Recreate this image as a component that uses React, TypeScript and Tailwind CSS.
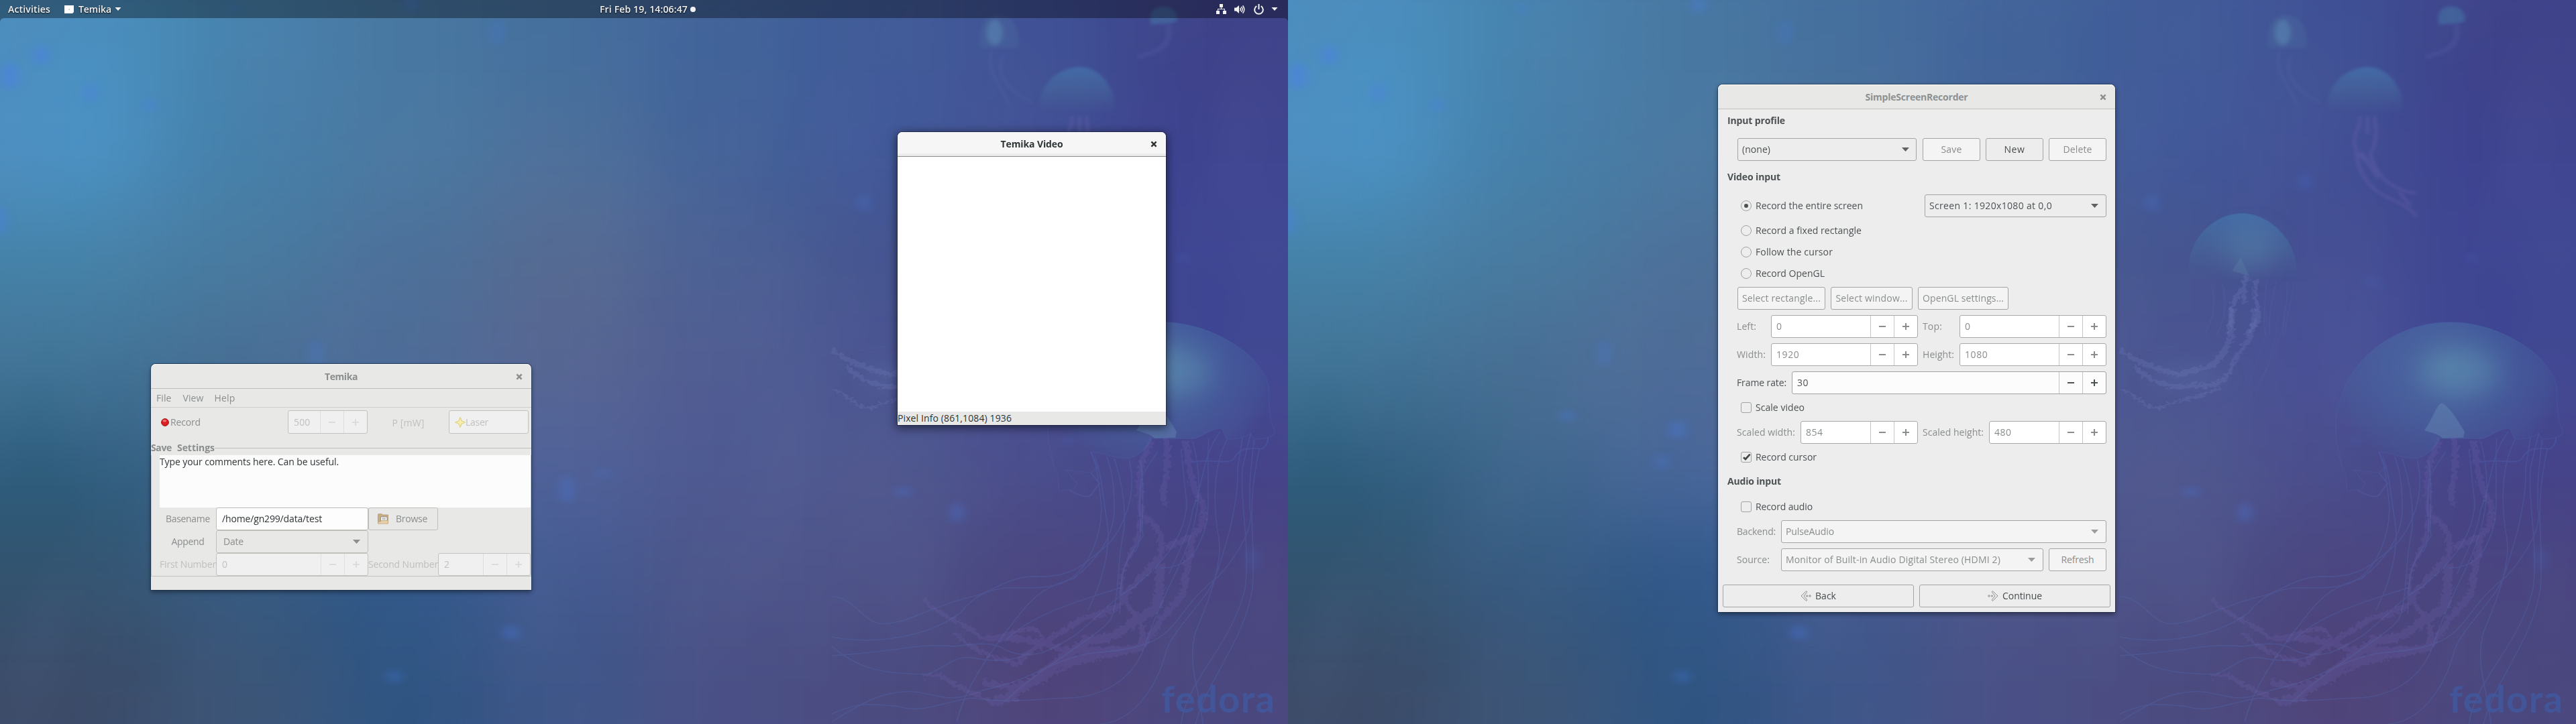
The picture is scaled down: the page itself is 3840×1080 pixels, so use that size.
import React, { useLayoutEffect, useRef, useState } from "react";
import clsx from "clsx";

/* Text whose tracking is adjusted so that it occupies a given width. */
function Txt({ w, className, children }: { w?: number; className?: string; children: string }) {
  const ref = useRef<HTMLSpanElement>(null);
  const [spacing, setSpacing] = useState(0);
  useLayoutEffect(() => {
    if (!ref.current || !w) return;
    setSpacing((w - ref.current.getBoundingClientRect().width) / children.length);
  }, []);
  return (
    <span ref={ref} className={clsx("inline-block whitespace-pre", className)} style={{ letterSpacing: `${spacing}px` }}>
      {children}
    </span>
  );
}

const SKY = [
  ["#4a90c0", "#4784ae", "#4878a2", "#456f9d", "#41639a", "#3f5a98", "#3e4f94", "#3e4289"],
  ["#4c93c6", "#4580aa", "#4a7aa2", "#4d719b", "#436298", "#41589a", "#414e94", "#3e4290"],
  ["#4483a8", "#4a7ba0", "#4a7098", "#566a90", "#4b6093", "#46558f", "#444e92", "#3e4592"],
  ["#3f7596", "#486e94", "#4f6c97", "#586692", "#505c92", "#4a5492", "#4a5198", "#3e4592"],
  ["#2c5c7c", "#40688e", "#48669a", "#51629a", "#4e5992", "#50598f", "#4a4d8c", "#444088"],
  ["#32546f", "#365b82", "#2f588a", "#445b92", "#4d5589", "#4c5086", "#4b4681", "#4a4580"],
  ["#3a4a66", "#3c5577", "#2c5380", "#3e5588", "#4a5085", "#4b4b80", "#4e4278", "#4a477e"],
];

const SPARKS: [number, number, number, number][] = [
  [12, 165, 10, 30], [50, 120, 8, 22], [182, 228, 5, 16], [110, 200, 6, 20], [1052, 440, 5, 20],
  [605, 70, 5, 30], [500, 10, 9, 18], [474, 930, 10, 20], [385, 765, 6, 30], [735, 1025, 5, 10],
  [622, 1370, 9, 16], [480, 1465, 8, 14], [1100, 1065, 8, 10], [1165, 1110, 7, 22], [690, 1060, 7, 30],
  [1238, 392, 6, 20], [1290, 410, 3, 6], [1320, 610, 5, 14], [1300, 955, 5, 8], [1440, 560, 4, 12],
  [1525, 1210, 5, 26], [455, 1000, 6, 16], [340, 900, 8, 12], [0, 480, 6, 34], [285, 18, 4, 16],
];

const THREADS = [
  "M0 1087C80 1090 110 1190 175 1190C260 1190 350 1120 480 1088C560 1070 600 1010 700 1012C830 1015 860 970 950 890C1000 830 1040 720 1030 620L1022 570",
  "M0 1240C150 1270 330 1240 440 1150C500 1070 560 1050 640 1055C800 1060 830 1020 870 965C920 880 935 780 922 700C915 640 912 590 892 545",
  "M0 1310C200 1300 300 1260 420 1275C520 1260 560 1260 600 1290C700 1340 780 1270 840 1230C930 1150 960 1100 1040 1050C1150 950 1210 860 1220 740L1200 530",
  "M0 1275C100 1370 200 1380 330 1380C400 1350 420 1310 480 1318C560 1330 600 1340 680 1300",
  "M0 1560C100 1490 180 1440 280 1446C350 1450 400 1500 520 1440C700 1400 760 1320 900 1300C1000 1290 1080 1280 1140 1230C1200 1180 1220 1100 1330 1010C1380 950 1440 850 1440 780C1430 700 1440 600 1452 495",
  "M0 1530C100 1480 140 1495 220 1500C320 1530 360 1490 480 1470C600 1490 700 1475 800 1470C960 1470 1050 1370 1080 1260C1130 1100 1180 1010 1210 930C1240 850 1290 700 1240 500",
  "M430 1560C450 1450 540 1300 620 1190C700 1070 740 1050 830 1020C900 960 960 880 970 780C975 680 960 600 945 560",
  "M600 1250C700 1140 900 1090 1000 1050",
  "M970 565C1000 660 1015 780 1000 860C980 960 990 1080 960 1170C920 1240 700 1360 580 1500",
  "M880 1140C940 1010 960 880 945 800C930 700 930 640 905 560",
  "M920 1568C1060 1560 1130 1380 1150 1290C1180 1200 1290 1100 1320 1010C1340 940 1400 760 1395 600L1412 488",
  "M1200 1568C1220 1400 1370 1280 1420 1060C1440 900 1400 720 1412 600L1440 470",
  "M1250 1568C1290 1400 1420 1250 1445 1060C1460 880 1420 760 1470 530",
  "M1275 1568C1265 1440 1220 1350 1250 1220C1290 1120 1345 960 1330 870C1310 740 1310 600 1358 495",
  "M1295 490C1290 640 1300 760 1285 820C1260 920 1220 980 1130 980",
  "M1335 465C1270 560 1280 660 1240 760C1230 840 1200 900 1160 1000",
  "M1060 570C1080 700 1060 800 1070 860C1000 960 990 1000 990 1150",
  "M1120 540C1080 610 1060 620 1060 700C1050 780 1080 860 1040 920",
];

const ARMS = [
  ["M1150 480C1155 540 1150 600 1150 640C1140 670 1130 690 1150 740", 20],
  ["M1215 500C1225 600 1240 690 1275 740C1290 860 1230 860 1150 900", 22],
  ["M1100 500C1050 590 1050 640 1062 780C1130 820 1140 870 1130 930C1090 1000 1010 1050 1000 1110C930 1170 870 1150 820 1200C720 1270 670 1290 630 1350", 22],
  ["M1240 850C1240 930 1210 980 1210 1080C1140 1150 1120 1200 1060 1280C960 1290 900 1290 800 1290C700 1250 640 1240 520 1245", 24],
  ["M1130 960C1120 1050 1140 1140 1080 1150C1000 1210 960 1260 880 1250C780 1330 700 1410 560 1490", 34],
  ["M1060 800C1060 900 990 960 995 1060C1010 1160 1120 1180 1040 1290C900 1320 800 1340 700 1420", 16],
  ["M315 1095C360 1160 440 1170 510 1240C600 1250 640 1200 700 1210L740 1260", 14],
  ["M420 1215C450 1270 530 1310 630 1340", 16],
  ["M310 1388L370 1384C430 1430 490 1450 560 1490L640 1470", 16],
  ["M520 1410C590 1430 640 1440 700 1390C790 1330 860 1320 940 1290", 22],
] as [string, number][];

function Wallpaper() {
  return (
    <svg className="h-[1080px] w-[1920px] shrink-0 overflow-hidden" viewBox="0 0 1920 1080" aria-hidden="true">
      <defs>
        <filter id="sky" x="-20%" y="-20%" width="140%" height="140%" colorInterpolationFilters="sRGB"><feGaussianBlur stdDeviation="70" /></filter>
        <filter id="soft" x="-100%" y="-100%" width="300%" height="300%" colorInterpolationFilters="sRGB"><feGaussianBlur stdDeviation="7" /></filter>
        <filter id="edge" x="-20%" y="-20%" width="140%" height="140%" colorInterpolationFilters="sRGB"><feGaussianBlur stdDeviation="6" /></filter>
        <filter id="glow" x="-100%" y="-100%" width="300%" height="300%" colorInterpolationFilters="sRGB"><feGaussianBlur stdDeviation="45" /></filter>
        <filter id="rag" x="-10%" y="-10%" width="120%" height="120%" colorInterpolationFilters="sRGB">
          <feTurbulence type="fractalNoise" baseFrequency="0.07" numOctaves="3" seed="4" result="n" />
          <feDisplacementMap in="SourceGraphic" in2="n" scale="30" xChannelSelector="R" yChannelSelector="G" />
        </filter>
        <filter id="mist" filterUnits="userSpaceOnUse" x="-800" y="-800" width="3600" height="2800" colorInterpolationFilters="sRGB">
          <feTurbulence type="fractalNoise" baseFrequency="0.006 0.003" numOctaves="2" seed="11" />
          <feColorMatrix values="0 0 0 0 0.4  0 0 0 0 0.47  0 0 0 0 0.66  2 0 0 0 -0.75" />
        </filter>
        <radialGradient id="bell" gradientUnits="userSpaceOnUse" cx="1120" cy="220" r="420">
          <stop offset="0" stopColor="#5685ad" stopOpacity="0.62" />
          <stop offset="0.5" stopColor="#4a70a6" stopOpacity="0.5" />
          <stop offset="0.85" stopColor="#46609b" stopOpacity="0.32" />
          <stop offset="1" stopColor="#4a5590" stopOpacity="0.05" />
        </radialGradient>
        <linearGradient id="dome" x1="0" y1="0" x2="0" y2="1">
          <stop offset="0" stopColor="#4478b0" stopOpacity="0.7" />
          <stop offset="0.5" stopColor="#486fa0" stopOpacity="0.45" />
          <stop offset="1" stopColor="#4a6595" stopOpacity="0" />
        </linearGradient>
      </defs>
      <g filter="url(#sky)">
        {[-1, 0, 1, 2, 3, 4, 5, 6, 7].map((r) =>
          [-1, 0, 1, 2, 3, 4, 5, 6, 7, 8].map((c) => (
            <rect key={`${r}.${c}`} x={c * 240 - 1} y={r * 155 - 2} width="242" height="157"
              fill={SKY[Math.min(6, Math.max(0, r))][Math.min(7, Math.max(0, c))]} />
          ))
        )}
      </g>
      <rect x="-800" y="-800" width="3600" height="2800" filter="url(#mist)" opacity="0.13" transform="rotate(12)" />
      <g transform="scale(1.2245 .6888)" filter="url(#soft)" fill="#4a7ee8">
        {SPARKS.map(([x, y, rx, ry], i) => (
          <ellipse key={i} cx={x} cy={y} rx={rx} ry={ry} opacity={x < 200 ? 0.55 : x > 1200 ? 0.22 : 0.34} />
        ))}
      </g>
      {/* distant jellyfish */}
      <g transform="translate(1240 0) scale(.4337 .3333)">
        <g filter="url(#edge)">
          <path d="M510 215C500 90 540 66 575 66C620 70 650 130 640 215Z" fill="#4f74a6" opacity="0.28" />
          <ellipse cx="560" cy="145" rx="28" ry="58" fill="#5f8fb5" opacity="0.5" filter="url(#edge)" />
          <path d="M1095 105C1090 50 1110 28 1140 28C1172 28 1190 60 1186 95C1160 112 1120 105 1095 112Z" fill="#4677a8" opacity="0.55" />
          <path d="M716 500C700 400 770 300 850 300C930 300 980 400 974 520C930 480 800 500 716 500Z" fill="url(#dome)" />
          <path d="M1155 110C1170 200 1130 230 1050 255" fill="none" stroke="#5562a8" strokeWidth="22" opacity="0.28" />
          <path d="M548 230C530 330 580 380 610 470M590 250C560 330 600 400 690 460" fill="none" stroke="#5f6cab" strokeWidth="9" opacity="0.28" />
          <path d="M825 520C830 580 790 610 812 670C815 760 850 830 900 870C950 900 1000 930 1020 970M875 520C885 600 880 650 860 690C880 770 920 850 1020 865M850 520L852 600M830 680L890 800C860 740 850 720 812 680M960 860L1000 920" fill="none" stroke="#6460a8" strokeWidth="11" opacity="0.5" />
        </g>
        <path d="M240 1240C220 1080 320 955 420 955C520 955 620 1090 608 1240C590 1250 540 1225 520 1232C490 1260 440 1240 410 1238C380 1280 300 1275 240 1240Z" fill="url(#dome)" />
        <ellipse cx="450" cy="1110" rx="90" ry="110" fill="#5f93b0" opacity="0.3" filter="url(#glow)" />
        <path d="M415 1150L386 1212L445 1236Z" fill="#6088ad" opacity="0.3" />
        <g fill="none" stroke="#6472b5" opacity="0.28" strokeWidth="2.5">
          <path d="M315 1265C330 1360 320 1440 290 1500M352 1270C370 1360 360 1440 330 1500M540 1255C520 1340 510 1420 515 1500M575 1260C580 1360 560 1420 560 1500M598 1260C590 1360 575 1400 566 1500M505 1260C500 1330 490 1420 500 1500" />
        </g>
        <g fill="none" stroke="#6f7ab8" opacity="0.32" filter="url(#rag)" strokeWidth="16">
          <path d="M440 1240C410 1330 370 1370 385 1430L370 1500M430 1240L425 1360M470 1250C450 1330 490 1400 470 1440L435 1500" />
        </g>
      </g>
      <g transform="translate(1240 460) scale(.4337 .3954)">
        <g fill="none" stroke="#6f7ab8" filter="url(#rag)" opacity="0.28">
          <path d="M390 0C370 80 410 90 350 170C330 230 260 230 200 250C120 230 60 200 0 160" strokeWidth="20" />
          <path d="M460 0C470 110 430 130 390 200C380 280 320 300 250 290C180 310 110 280 50 220" strokeWidth="18" />
          <path d="M0 305C60 320 80 380 130 375C220 340 260 340 350 300" strokeWidth="9" />
        </g>
        <ellipse cx="230" cy="260" rx="130" ry="35" fill="#6a7fb5" opacity="0.3" filter="url(#glow)" />
        <g fill="none" stroke="#5a6cae" strokeWidth="2" opacity="0.3">
          <path d="M500 0C520 120 470 180 440 300M540 0C550 130 500 220 450 400M565 0C560 150 480 280 440 340M330 0C300 110 200 150 90 160" />
        </g>
        <path d="M780 690L778 640C760 590 740 520 742 440C745 250 900 52 1140 52C1330 55 1500 200 1503 310C1500 380 1510 440 1526 470C1500 490 1470 495 1450 492L1440 475L1400 490L1358 495L1340 452C1290 455 1270 492 1240 492L1100 490C1080 540 1040 570 1000 566C960 560 930 545 890 542L912 600L890 620L805 610L843 662L830 682Z" fill="url(#bell)" stroke="#5273bd" strokeOpacity="0.22" strokeWidth="3" />
        <ellipse cx="1170" cy="240" rx="130" ry="90" fill="#629ab5" opacity="0.45" filter="url(#glow)" />
        <path d="M1105 357C1085 370 1075 420 1046 460L1090 475L1110 490L1180 488L1185 465C1160 420 1130 365 1105 357Z" fill="#6a8fb8" opacity="0.42" />
        <g fill="none" stroke="#6e61ab" opacity="0.26" filter="url(#rag)">
          {ARMS.map(([d, sw], i) => <path key={i} d={d} strokeWidth={sw} />)}
        </g>
        <g fill="none" stroke="#587bc8" strokeWidth="4" opacity="0.22">
          {THREADS.map((d, i) => <path key={i} d={d} />)}
          <path d="M818 686C860 712 880 715 890 705L920 660L890 620M1240 580C1300 565 1360 590 1380 570C1400 530 1420 525 1478 530C1495 520 1498 505 1500 488" strokeWidth="5" />
        </g>
      </g>
      <text x="1731" y="1062.5" fontFamily="Lato" fontWeight="700" fontSize="56" textLength="169" fill="#41599e" opacity="0.85">fedora</text>
    </svg>
  );
}

const Arrow = ({ className }: { className?: string }) => (
  <svg viewBox="0 0 11 6" className={clsx("h-[6px] w-[11px] shrink-0", className)}><path d="M0 0H11L5.5 6Z" fill="currentColor" /></svg>
);

const Minus = () => <span className="h-[2px] w-[10px] bg-current" />;
const Plus = () => (
  <svg viewBox="0 0 10 10" className="size-[10px]"><path d="M4 0H6V4H10V6H6V10H4V6H0V4H4Z" fill="currentColor" /></svg>
);

const Close = ({ className }: { className: string }) => (
  <svg viewBox="0 0 10 10" className={clsx("absolute top-[13px] size-[10px]", className)}>
    <path d="M1.4 1.4L8.6 8.6M8.6 1.4L1.4 8.6" stroke="currentColor" strokeWidth="2.5" />
  </svg>
);

function Spin({ value, className, vw, light, pad = "pl-[8px]" }: { value: string; className: string; vw?: number; light?: boolean; pad?: string }) {
  const cell = clsx("flex w-[35px] items-center justify-center border-l", light ? "border-[#dededc] text-[#dcdcda]" : "border-[#c4c4c4]");
  return (
    <div className={clsx("flex overflow-hidden rounded-[3px] border", className)}>
      <div className={clsx("flex min-w-0 flex-1 items-center", pad)}><Txt w={vw}>{value}</Txt></div>
      <div className={cell}><Minus /></div>
      <div className={cell}><Plus /></div>
    </div>
  );
}

const OFF = "border-[#a8a9a9] bg-white text-[#8a8d8d]";
const ON = "border-[#a0a1a1] bg-[#fcfcfc] text-[#4c5153]";

function Button({ w, className, off, children, icon }: { w: number; className: string; off?: boolean; children: string; icon?: React.ReactNode }) {
  return (
    <div className={clsx("flex h-[34px] items-center justify-center rounded-[3px] border border-[#a3a4a4]", off ? "bg-[#f4f4f4] text-[#8a8d8d]" : "bg-[#ededed] text-[#474c4e]", className)}>
      {icon}
      <Txt w={w}>{children}</Txt>
    </div>
  );
}

function Combo({ w, className, off, children }: { w: number; className: string; off?: boolean; children: string }) {
  return (
    <div className={clsx("flex h-[34px] items-center justify-between rounded-[3px] border border-[#a3a4a4] pr-[11px] pl-[6px]", off ? "bg-[#f4f4f4] text-[#8a8d8d]" : "bg-[#ededed] text-[#4c5153]", className)}>
      <Txt w={w}>{children}</Txt>
      <Arrow className={off ? "text-[#9a9d9d]" : "text-[#5e6264]"} />
    </div>
  );
}

function Choice({ w, kind, on, className, children }: { w: number; kind: "radio" | "check"; on?: boolean; className: string; children: string }) {
  return (
    <div className={clsx("flex h-[20px] items-center pl-[34px]", className)}>
      <span className={clsx("mr-[6px] flex size-[16px] items-center justify-center border border-[#a0a3a3]", kind === "radio" ? "rounded-full" : "rounded-[3px]")}>
        {on && kind === "radio" && <span className="size-[6px] rounded-full bg-[#4c5153]" />}
        {on && kind === "check" && (
          <svg viewBox="0 0 14 14" className="size-[14px]"><path d="M3 7.2L6 10L12.6 2.6" fill="none" stroke="#43484a" strokeWidth="2.8" /></svg>
        )}
      </span>
      <Txt w={w}>{children}</Txt>
    </div>
  );
}

const Chevron = ({ flip }: { flip?: boolean }) => (
  <svg viewBox="0 0 16 16" className={clsx("mr-[6px] size-[16px]", flip && "-scale-x-100")} fill="none" stroke="#7d8081" strokeWidth="0.9">
    <path d="M8.6 0.6L1 8L8.6 15.4L10 14L9.4 13.4L5 8L9.4 2.6L10 2Z" />
    <circle cx="9.6" cy="8" r="1.2" />
    <circle cx="14" cy="8" r="1.2" />
  </svg>
);

function TopBar() {
  return (
    <div className="absolute top-0 left-0 flex h-[27px] w-[1920px] items-center justify-between bg-black/35 text-[#f2f2f2] [text-shadow:0_1px_2px_rgba(0,0,0,0.9)]">
      <div className="flex w-[400px] items-center pl-[12px] font-semibold">
        <Txt w={63}>Activities</Txt>
        <svg viewBox="0 0 14 12" className="mr-[7px] ml-[21px] h-[12px] w-[14px]">
          <path d="M0 0H14V10L12 12H0Z" fill="#fff" /><path d="M6 6.5L8 4.5V7H6Z" fill="#c4c4c4" />
        </svg>
        <Txt w={49}>Temika</Txt>
        <Arrow className="ml-[5px] h-[5px]! w-[10px]! drop-shadow" />
      </div>
      <div className="flex items-center pl-[11px] font-semibold">
        <Txt w={131}>Fri Feb 19, 14:06:47</Txt>
        <span className="ml-[4px] size-[8px] rounded-full bg-[#f2f2f2] shadow" />
      </div>
      <div className="flex w-[400px] items-center justify-end pr-[15px]">
        <svg viewBox="0 0 15 15" className="mr-[12px] size-[15px]" fill="currentColor">
          <path d="M5 0H10V5H5ZM0 10H5V15H0ZM10 10H15V15H10ZM7 5H8V7H13V10H12V8H3V10H2V7H7Z" />
        </svg>
        <svg viewBox="0 0 16 14" className="mr-[13px] h-[14px] w-[16px]" fill="none" stroke="currentColor">
          <path d="M0 4.5H3L7 1V13L3 9.5H0Z" fill="currentColor" stroke="none" />
          <path d="M8.6 4.6Q10 7 8.6 9.4M10.6 3Q13.2 7 10.6 11M12.6 1.2Q17 7 12.6 12.8" strokeWidth="1.5" />
        </svg>
        <svg viewBox="0 0 15 16" className="mr-[11px] h-[16px] w-[15px]" fill="none" stroke="currentColor" strokeWidth="2">
          <path d="M4.2 3.2A6.3 6.3 0 1 0 10.8 3.2" /><path d="M7.5 0V8" />
        </svg>
        <Arrow className="h-[5px]! w-[10px]!" />
      </div>
      {/* rounded screen corners under the bar */}
      <svg viewBox="0 0 6 6" className="absolute top-full left-0 size-[6px]"><path d="M0 0H6A6 6 0 0 0 0 6Z" fill="#000" opacity="0.35" /></svg>
      <svg viewBox="0 0 6 6" className="absolute top-full right-0 size-[6px] -scale-x-100"><path d="M0 0H6A6 6 0 0 0 0 6Z" fill="#000" opacity="0.35" /></svg>
    </div>
  );
}

function TemikaWindow() {
  const label = "flex shrink-0 items-center justify-center";
  return (
    <div className="absolute top-[543px] left-[225px] flex h-[337px] w-[567px] flex-col rounded-t-[7px] bg-[#e8e8e6] text-[#8a8e8e] shadow-[0_0_0_1px_rgba(20,40,70,0.5),0_3px_7px_rgba(0,0,0,0.45)]">
      <div className="relative flex h-[37px] shrink-0 items-center justify-center rounded-t-[7px] border-t border-b border-t-white border-b-[#bfbfbb] font-bold">
        <Txt w={49}>Temika</Txt>
        <Close className="right-[13px]" />
      </div>
      <div className="flex h-[28px] shrink-0 items-center border-b border-[#cdcdc9] pl-[8px]">
        <Txt w={22.5}>File</Txt>
        <Txt w={31} className="ml-[17px]">View</Txt>
        <Txt w={31} className="ml-[16px]">Help</Txt>
      </div>
      <div className="mt-[4px] flex h-[35px] shrink-0 items-center">
        <div className="flex w-[204px] items-center pl-[15px]">
          <svg viewBox="0 0 12 12" className="mr-[2px] size-[12px]">
            <circle cx="6" cy="6" r="5.4" fill="#dc1f22" stroke="#9c1012" /><ellipse cx="5.4" cy="3.8" rx="2.8" ry="1.8" fill="#f08a86" opacity="0.8" />
          </svg>
          <Txt w={45}>Record</Txt>
        </div>
        <Spin light value="500" vw={24.5} className="h-[35px] w-[119px] border-[#c2c2be] bg-[#f0f0f0] text-[#bfc1bf]" />
        <div className="flex w-[121px] items-center justify-center pt-[2px] text-[#bfc1bf]"><Txt w={48}>P [mW]</Txt></div>
        <div className="flex h-[35px] w-[119px] items-center rounded-[3px] border border-[#c2c2be] bg-[#f0f0f0] pl-[8px] text-[#bfc1bf]">
          <svg viewBox="0 0 16 16" className="size-[16px]"><path d="M8 .8L10.2 5.8L15.2 8L10.2 10.2L8 15.2L5.8 10.2L.8 8L5.8 5.8Z" fill="#f6eeb2" stroke="#e2d280" strokeWidth="1.2" /></svg>
          <Txt w={34}>Laser</Txt>
        </div>
      </div>
      <div className="mt-[10px] flex h-[22px] shrink-0 items-center font-bold">
        <Txt w={31}>Save</Txt>
        <Txt w={56} className="ml-[8px]">Settings</Txt>
        <span className="h-px flex-1 bg-[#bfbfbb]" />
      </div>
      <div className="flex h-[181px] shrink-0 flex-col border-x border-b border-[#c2c2be] pl-[12px]">
        <div className="h-[78px] shrink-0 bg-[#fcfcfc] text-[#2e3436]"><Txt w={267}>Type your comments here. Can be useful.</Txt></div>
        <div className="flex h-[34px]">
          <div className={clsx(label, "w-[84px]")}><Txt w={66}>Basename</Txt></div>
          <div className="flex w-[227px] items-center rounded-[3px] border border-[#bcbcb8] bg-[#fdfdfd] pl-[8px] text-[#2e3436]"><Txt w={149}>/home/gn299/data/test</Txt></div>
          <div className="flex w-[104px] items-center rounded-[3px] border border-[#bfbfbb] pl-[13px]">
            <svg viewBox="0 0 16 16" className="mr-[11px] size-[16px]">
              <path d="M.5 1.5Q.5.7 1.3.7H6L7 2H15.4V14.5H.5Z" fill="#c6ad86" stroke="#b3966b" strokeWidth=".8" />
              <path d="M4.5 5H14V11H4.5Z" fill="#fff" stroke="#8a8a8a" strokeWidth=".9" /><path d="M6.5 7.2H12M6.5 8.8H12" stroke="#999" strokeWidth=".9" />
              <path d="M.6 15.3V12.6H4L6 10.6H15.4V15.3Z" fill="#e6cfad" stroke="#c6a97c" strokeWidth=".8" />
            </svg>
            <Txt w={47}>Browse</Txt>
          </div>
        </div>
        <div className="flex h-[34px]">
          <div className={clsx(label, "w-[84px]")}><Txt w={49}>Append</Txt></div>
          <div className="flex w-[227px] items-center justify-between rounded-[3px] border border-[#bfbfbb] pr-[11px] pl-[10px]"><Txt w={30}>Date</Txt><Arrow /></div>
        </div>
        <div className="flex h-[34px]">
          <div className={clsx(label, "w-[84px] text-[#bfc1bf]")}><Txt w={84}>First Number</Txt></div>
          <Spin light value="0" className="w-[227px] border-[#c2c2be] bg-[#f0f0f0] text-[#bfc1bf]" />
          <div className={clsx(label, "w-[104px] text-[#bfc1bf]")}><Txt w={104}>Second Number</Txt></div>
          <Spin light value="2" className="w-[138px] border-[#c2c2be] bg-[#f0f0f0] text-[#bfc1bf]" />
        </div>
      </div>
    </div>
  );
}

function VideoWindow() {
  return (
    <div className="absolute top-[197px] left-[1338px] flex h-[437px] w-[400px] flex-col rounded-t-[7px] bg-white text-[#2e3436] shadow-[0_0_0_1px_rgba(10,15,40,0.45),0_3px_14px_2px_rgba(0,0,0,0.5)]">
      <div className="relative flex h-[37px] shrink-0 items-center justify-center rounded-t-[7px] border-b border-[#8e908d] bg-linear-to-b from-[#f6f6f6] from-85% to-[#e4e4e2] font-bold">
        <Txt w={93}>Temika Video</Txt>
        <Close className="right-[13px]" />
      </div>
      <div className="flex-1 bg-white" />
      <div className="flex h-[20px] shrink-0 items-center bg-[#e8e8e7]"><Txt w={170}>Pixel Info (861,1084) 1936</Txt></div>
    </div>
  );
}

function RecorderWindow() {
  const row = "flex h-[34px] shrink-0 items-center pr-[13px] pl-[28px]";
  const head = "flex h-[18px] shrink-0 items-center pl-[14px] font-bold text-[#4c5153]";
  return (
    <div className="absolute top-[126px] left-[2561px] flex h-[787px] w-[592px] flex-col rounded-t-[7px] bg-[#ededed] text-[#4c5153] shadow-[0_0_0_1px_rgba(20,40,70,0.5),0_3px_7px_rgba(0,0,0,0.45)]">
      <div className="relative flex h-[37px] shrink-0 items-center justify-center rounded-t-[7px] border-t border-b border-t-white border-b-[#bfbfbb] bg-[#e8e8e6] font-bold text-[#8d9191]">
        <Txt w={153}>SimpleScreenRecorder</Txt>
        <Close className="right-[13px]" />
      </div>
      <div className={clsx(head, "mt-[8px]")}><Txt w={86}>Input profile</Txt></div>
      <div className={clsx(row, "mt-[17px] gap-[8px] pl-[29px]!")}>
        <Combo w={42} className="mr-px flex-1 pr-[10px]!">(none)</Combo>
        <Button off w={31} className="w-[86px]">Save</Button>
        <Button w={31} className="w-[86px]">New</Button>
        <Button off w={43} className="w-[86px]">Delete</Button>
      </div>
      <div className={clsx(head, "mt-[15px]")}><Txt w={79}>Video input</Txt></div>
      <div className={clsx(row, "mt-[17px] justify-between pl-0!")}>
        <Choice w={160} kind="radio" on className="">Record the entire screen</Choice>
        <Combo w={183} className="w-[271px]">Screen 1: 1920x1080 at 0,0</Combo>
      </div>
      <Choice w={158} kind="radio" className="mt-[10px]">Record a fixed rectangle</Choice>
      <Choice w={115} kind="radio" className="mt-[12px]">Follow the cursor</Choice>
      <Choice w={103} kind="radio" className="mt-[12px]">Record OpenGL</Choice>
      <div className={clsx(row, "mt-[10px] gap-[8px] pl-[29px]!")}>
        <Button off w={117} className="w-[131px]">Select rectangle...</Button>
        <Button off w={107} className="w-[122px]">Select window...</Button>
        <Button off w={121} className="w-[135px]">OpenGL settings...</Button>
      </div>
      {[["Left:", "0", "Top:", "0", 29, 29], ["Width:", "1920", "Height:", "1080", 43, 47]].map((r) => (
        <div key={r[0]} className={clsx(row, "mt-[8px] text-[#8a8d8d]")}>
          <div className="w-[51px]"><Txt w={r[4] as number}>{r[0] as string}</Txt></div>
          <Spin value={r[1] as string} vw={(r[1] as string).length * 8.6} pad="pl-[7px]" className={clsx("h-full w-[219px]", OFF)} />
          <div className="w-[62px] pl-[7px]"><Txt w={r[5] as number}>{r[2] as string}</Txt></div>
          <Spin value={r[3] as string} vw={(r[3] as string).length * 8.6} pad="pl-[7px]" className={clsx("h-full w-[219px]", OFF)} />
        </div>
      ))}
      <div className={clsx(row, "mt-[8px]")}>
        <div className="w-[82px]"><Txt w={74}>Frame rate:</Txt></div>
        <Spin value="30" vw={17.2} pad="pl-[7px]" className={clsx("h-full flex-1", ON)} />
      </div>
      <Choice w={73} kind="check" className="mt-[10px]">Scale video</Choice>
      <div className={clsx(row, "mt-[10px] text-[#8a8d8d]")}>
        <div className="w-[95px]"><Txt w={87}>Scaled width:</Txt></div>
        <Spin value="854" vw={25.5} pad="pl-[7px]" className={clsx("h-full w-[175px]", OFF)} />
        <div className="w-[106px] pl-[7px]"><Txt w={91}>Scaled height:</Txt></div>
        <Spin value="480" vw={25.5} pad="pl-[7px]" className={clsx("h-full w-[175px]", OFF)} />
      </div>
      <Choice w={91} kind="check" on className="mt-[10px]">Record cursor</Choice>
      <div className={clsx(head, "mt-[17px]")}><Txt w={80}>Audio input</Txt></div>
      <Choice w={85} kind="check" className="mt-[19px]">Record audio</Choice>
      <div className={clsx(row, "mt-[10px] text-[#8a8d8d]")}>
        <div className="w-[66px]"><Txt w={58}>Backend:</Txt></div>
        <Combo off w={72} className="flex-1">PulseAudio</Combo>
      </div>
      <div className={clsx(row, "mt-[8px] text-[#8a8d8d]")}>
        <div className="w-[66px]"><Txt w={49}>Source:</Txt></div>
        <Combo off w={320} className="mr-[8px] flex-1">Monitor of Built-in Audio Digital Stereo (HDMI 2)</Combo>
        <Button off w={49} className="w-[86px]">Refresh</Button>
      </div>
      <div className="mt-[20px] flex gap-[8px] px-[7px]">
        <Button w={31} className="flex-1" icon={<Chevron />}>Back</Button>
        <Button w={59} className="flex-1" icon={<Chevron flip />}>Continue</Button>
      </div>
    </div>
  );
}

export default function App() {
  return (
    <div className="relative flex h-[1080px] w-[3840px] overflow-hidden bg-[#485f92] font-['Open_Sans','Noto_Sans',sans-serif] text-[14px] leading-[20px]">
      <Wallpaper />
      <Wallpaper />
      <TopBar />
      <VideoWindow />
      <TemikaWindow />
      <RecorderWindow />
    </div>
  );
}
